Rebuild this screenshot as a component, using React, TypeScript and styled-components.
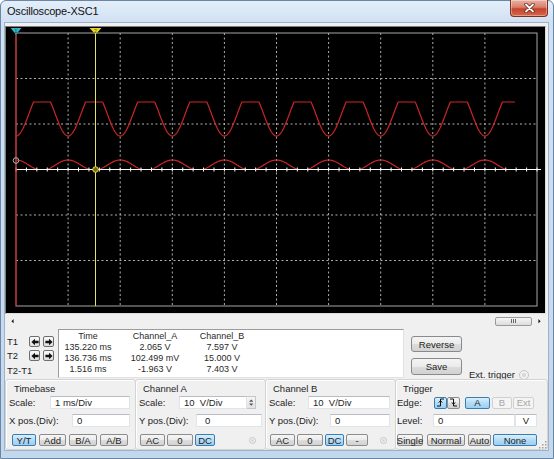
import styled, { createGlobalStyle } from 'styled-components';

const GlobalStyle = createGlobalStyle`
  html, body { margin: 0; padding: 0; }
  body {
    width: 554px;
    height: 459px;
    overflow: hidden;
    background: #fff;
    font-family: 'Liberation Sans', Arial, sans-serif;
    font-size: 9px;
    color: #1e1e1e;
  }
  * { box-sizing: border-box; }
`;

// scope geometry, in page pixels
const X0 = 16;
const X1 = 537;
const Y0 = 33;
const Y1 = 306;
const DX = 52.1;
const DY = 45.5;
const AXIS = Y0 + 3 * DY;
const TRACE_END = 515;

const traceA = () => {
  let d = '';
  for (let x = X0; x <= TRACE_END; x += 0.5) {
    const t = (2 * Math.PI * (x - X0)) / DX;
    const v = Math.min(1, (1 - Math.cos(t)) / 1.515);
    const y = 136 - 34 * v;
    d += `${d ? 'L' : 'M'}${x.toFixed(1)} ${y.toFixed(2)}`;
  }
  return d;
};

const traceB = () => {
  let d = '';
  for (let x = X0; x <= TRACE_END; x += 0.5) {
    const t = (2 * Math.PI * (x - X0)) / DX;
    const v = Math.max(0, (Math.cos(t) + 0.825) / 1.825);
    const y = AXIS - 9.5 * v;
    d += `${d ? 'L' : 'M'}${x.toFixed(1)} ${y.toFixed(2)}`;
  }
  return d;
};

const Scope = () => {
  const vx = Array.from({ length: 9 }, (_, i) => X0 + DX * (i + 1));
  const hy = [1, 2, 4, 5].map((k) => Y0 + DY * k);
  const ticks = Array.from({ length: 51 }, (_, i) => X0 + (DX / 5) * i);
  const t2 = 95.5;
  return (
    <svg width={539} height={286} viewBox="6 27 539 286" style={{ display: 'block' }}>
      <rect x={6} y={27} width={539} height={286} fill="#000" />
      {vx.map((x) => (
        <line key={x} x1={x} y1={Y0} x2={x} y2={Y1} stroke="#b0b0b0" strokeDasharray="2 2.5" />
      ))}
      {hy.map((y) => (
        <line key={y} x1={X0} y1={y} x2={X1} y2={y} stroke="#b0b0b0" strokeDasharray="2 2.5" />
      ))}
      <rect x={X0} y={Y0} width={X1 - X0} height={Y1 - Y0} fill="none" stroke="#a6a6a6" />
      <path d={traceA()} fill="none" stroke="#cc2626" strokeWidth={1.2} />
      <path d={traceB()} fill="none" stroke="#cc2626" strokeWidth={1.2} />
      <line x1={X0} y1={AXIS} x2={541} y2={AXIS} stroke="#fff" />
      {ticks.map((x) => (
        <line key={x} x1={x} y1={AXIS - 2} x2={x} y2={AXIS + 2} stroke="#fff" />
      ))}
      <line x1={X0} y1={30} x2={X0} y2={Y1} stroke="#c41a1a" strokeWidth={1.2} />
      <line x1={t2} y1={30} x2={t2} y2={Y1} stroke="#e2e26a" strokeWidth={1} />
      <polygon points="10.5,28 21.5,28 16,34.5" fill="#2fb6c6" />
      <text x={16} y={32.6} fontSize={5} textAnchor="middle" fill="#0a3a40" fontFamily="Liberation Sans, sans-serif">1</text>
      <polygon points="89.5,28 101.5,28 95.5,34.5" fill="#e6d62a" />
      <text x={t2} y={32.6} fontSize={5} textAnchor="middle" fill="#4a4000" fontFamily="Liberation Sans, sans-serif">2</text>
      <circle cx={X0} cy={160.5} r={2.8} fill="none" stroke="#9fb8c0" strokeWidth={1} />
      <circle cx={t2} cy={AXIS} r={2.8} fill="#7a6a10" stroke="#e6d84a" strokeWidth={1} />
    </svg>
  );
};

const Window = styled.div`
  width: 554px;
  height: 459px;
  display: flex;
  flex-direction: column;
  padding: 0 4px 7px 3px;
  border: 1px solid #6a86a6;
  border-radius: 6px 6px 0 0;
  background: linear-gradient(180deg, #e4eef9 0, #d0e1f3 21px, #c3d7ed 100%);
`;

const TitleBar = styled.div`
  height: 21px;
  flex: none;
  display: flex;
  justify-content: space-between;
  align-items: flex-start;
`;

const Title = styled.div`
  padding: 4px 0 0 3px;
  font-size: 11px;
  letter-spacing: -0.2px;
  color: #111;
`;

const CloseButton = styled.div`
  width: 38px;
  height: 17px;
  margin-top: -1px;
  margin-right: 1px;
  display: flex;
  align-items: center;
  justify-content: center;
  border: 1px solid #7e2e26;
  border-top: none;
  border-radius: 0 0 4px 4px;
  background: linear-gradient(180deg, #eab0a2 0%, #d8806c 45%, #c5432c 55%, #d8654a 100%);
  box-shadow: inset 0 0 0 1px rgba(255, 255, 255, 0.35);
`;

const Client = styled.div`
  flex: 1;
  position: relative;
  display: flex;
  flex-direction: column;
  padding-top: 3px;
  background: #f0f0f0;
  border: 1px solid #9cb2ca;
`;

const ScreenFrame = styled.div`
  width: 541px;
  height: 288px;
  border: 1px solid;
  border-color: #7c7c7c #dcdcdc #dcdcdc #7c7c7c;
  background: #000;
`;

const ScrollBar = styled.div`
  height: 12px;
  margin-top: 1px;
  display: flex;
  align-items: center;
`;

const ScrollArrow = styled.div<{ $w: number }>`
  width: ${(p) => p.$w}px;
  height: 12px;
  display: flex;
  align-items: center;
  justify-content: center;
`;

const ScrollTrack = styled.div`
  flex: 1;
  height: 12px;
  display: flex;
  align-items: center;
  justify-content: flex-end;
`;

const ScrollThumb = styled.div`
  width: 37px;
  height: 9px;
  margin-right: 1px;
  border: 1px solid #9a9a9a;
  border-radius: 2px;
  background: linear-gradient(180deg, #f6f6f6, #dcdcdc);
  display: flex;
  align-items: center;
  justify-content: center;
  gap: 1px;
`;

const Grip = styled.span`
  width: 1px;
  height: 4px;
  background: #6a6a6a;
`;

const ReadoutRow = styled.div`
  height: 49px;
  margin-top: 2px;
  display: flex;
`;

const CursorPanel = styled.div`
  width: 53px;
  padding: 7px 0 0 2px;
  display: flex;
  flex-direction: column;
`;

const CursorLine = styled.div<{ $gap: number }>`
  height: 11px;
  margin-top: ${(p) => p.$gap}px;
  display: flex;
  align-items: center;
  gap: 3px;
  font-size: 9.5px;
`;

const CursorName = styled.span<{ $w: number }>`
  width: ${(p) => p.$w}px;
`;

const StepButton = styled.div`
  width: 11px;
  height: 11px;
  border: 1px solid #6e6e6e;
  border-radius: 2px;
  background: linear-gradient(180deg, #fafafa, #dedede);
  display: flex;
  align-items: center;
  justify-content: center;
`;

const ReadoutBox = styled.div`
  width: 346px;
  height: 49px;
  padding-top: 1px;
  background: #fff;
  border: 1px solid;
  border-color: #9c9c9c #e2e2e2 #e2e2e2 #9c9c9c;
  display: grid;
  grid-template-columns: 58px 76px 58px;
  grid-auto-rows: 11px;
  align-content: start;
`;

const Cell = styled.div`
  text-align: center;
  line-height: 11px;
  white-space: nowrap;
  color: #2a2a2a;
`;

const SideButtons = styled.div`
  width: 51px;
  margin-left: 7px;
  display: flex;
  flex-direction: column;
`;

const BigButton = styled.div<{ $h: number; $top: number }>`
  height: ${(p) => p.$h}px;
  margin-top: ${(p) => p.$top}px;
  border: 1px solid #8a8a8a;
  border-radius: 3px;
  background: linear-gradient(180deg, #f4f4f4 0%, #ebebeb 50%, #dcdcdc 51%, #d2d2d2 100%);
  display: flex;
  align-items: center;
  justify-content: center;
  font-size: 9.5px;
  color: #1e1e1e;
`;

const ExtTrigger = styled.div`
  margin-left: 7px;
  margin-bottom: -2px;
  align-self: flex-end;
  height: 11px;
  display: flex;
  align-items: center;
  gap: 4px;
  font-size: 9.5px;
`;

const Radio = styled.span<{ $size: number }>`
  width: ${(p) => p.$size}px;
  height: ${(p) => p.$size}px;
  border-radius: 50%;
  border: 1px solid #c4c4c4;
  background: radial-gradient(circle at 50% 50%, #d8d8d8 0 30%, #f2f2f2 45%);
  flex: none;
`;

const GroupRow = styled.div`
  height: 71px;
  margin-top: 1px;
  display: flex;
`;

const Group = styled.div<{ $w: number; $pad?: number }>`
  width: ${(p) => p.$w}px;
  padding: 3px 0 0 ${(p) => p.$pad ?? 3}px;
  border: 1px solid #d3d3d3;
  border-radius: 3px;
  box-shadow: inset 1px 1px 0 #fff;
  display: flex;
  flex-direction: column;
  & + & {
    margin-left: -1px;
  }
`;

const GroupLabel = styled.div<{ $indent: number }>`
  height: 12px;
  line-height: 12px;
  margin-left: ${(p) => p.$indent}px;
  font-size: 9.5px;
`;

const FieldRow = styled.div<{ $top: number }>`
  height: 13px;
  margin-top: ${(p) => p.$top}px;
  display: flex;
  align-items: center;
`;

const FieldLabel = styled.span<{ $w: number }>`
  width: ${(p) => p.$w}px;
  flex: none;
  font-size: 9.5px;
  white-space: nowrap;
`;

const Field = styled.div<{ $w: number; $pad?: number; $center?: boolean }>`
  width: ${(p) => p.$w}px;
  height: 13px;
  padding-left: ${(p) => p.$pad ?? 4}px;
  background: #fff;
  border: 1px solid #e0e3e8;
  border-top-color: #b9bcc2;
  display: flex;
  align-items: center;
  justify-content: ${(p) => (p.$center ? 'center' : 'flex-start')};
  font-size: 9.5px;
  white-space: pre;
`;

const Spinner = styled.div`
  width: 9px;
  height: 13px;
  border: 1px solid #c6c6c6;
  border-left: none;
  background: linear-gradient(180deg, #f6f6f6, #e2e2e2);
  display: flex;
  flex-direction: column;
  align-items: center;
  justify-content: space-around;
  padding: 1px 0;
`;

const ButtonRow = styled.div<{ $indent: number }>`
  height: 12px;
  margin-top: 7px;
  margin-left: ${(p) => p.$indent}px;
  display: flex;
  align-items: center;
`;

const Btn = styled.div<{ $w: number; $gap?: number; $on?: boolean; $off?: boolean }>`
  width: ${(p) => p.$w}px;
  height: 12px;
  margin-left: ${(p) => p.$gap ?? 0}px;
  flex: none;
  display: flex;
  align-items: center;
  justify-content: center;
  font-size: 9.5px;
  color: ${(p) => (p.$off ? '#a6a6a6' : '#1e1e1e')};
  border: 1px solid ${(p) => (p.$on ? '#3a7db3' : p.$off ? '#d0d0d0' : '#8c8c8c')};
  border-radius: 2px;
  background: ${(p) =>
    p.$on
      ? 'linear-gradient(180deg, #d9effc 0%, #b3dcf6 50%, #9ccff2 100%)'
      : p.$off
        ? '#f4f4f4'
        : 'linear-gradient(180deg, #f6f6f6 0%, #ebebeb 50%, #dddddd 51%, #d3d3d3 100%)'};
`;

const ResizeGrip = styled.svg`
  position: absolute;
  right: 1px;
  bottom: 1px;
`;

const Arrow = ({ dir }: { dir: 'l' | 'r' }) => (
  <svg width={8} height={8} viewBox="0 0 10 10">
    <path
      d={dir === 'l' ? 'M0.5 5 L5 0.8 V3.3 H9.5 V6.7 H5 V9.2 Z' : 'M9.5 5 L5 0.8 V3.3 H0.5 V6.7 H5 V9.2 Z'}
      fill="#111"
    />
  </svg>
);

const Tri = ({ dir, size = 4, color = '#222' }: { dir: 'l' | 'r' | 'u' | 'd'; size?: number; color?: string }) => {
  const pts = {
    l: '4,0 4,8 0,4',
    r: '0,0 0,8 4,4',
    u: '0,4 8,4 4,0',
    d: '0,0 8,0 4,4',
  }[dir];
  const vertical = dir === 'u' || dir === 'd';
  return (
    <svg width={vertical ? size * 1.5 : size} height={vertical ? size : size * 1.5} viewBox={vertical ? '0 0 8 4' : '0 0 4 8'}>
      <polygon points={pts} fill={color} />
    </svg>
  );
};

const EdgeIcon = ({ rising }: { rising: boolean }) => (
  <svg width={9} height={9} viewBox="0 0 9 9">
    <path
      d={rising ? 'M1 8 H4.5 V1 H8' : 'M1 1 H4.5 V8 H8'}
      fill="none"
      stroke="#111"
      strokeWidth={1}
    />
    <path d={rising ? 'M2.8 4.6 L4.5 2.6 L6.2 4.6' : 'M2.8 4.4 L4.5 6.4 L6.2 4.4'} fill="none" stroke="#111" strokeWidth={1} />
  </svg>
);

const readout = [
  ['Time', 'Channel_A', 'Channel_B'],
  ['135.220 ms', '2.065 V', '7.597 V'],
  ['136.736 ms', '102.499 mV', '15.000 V'],
  ['1.516 ms', '-1.963 V', '7.403 V'],
];

export default function App() {
  return (
    <>
      <GlobalStyle />
      <Window>
        <TitleBar>
          <Title>Oscilloscope-XSC1</Title>
          <CloseButton>
            <svg width={11} height={10} viewBox="0 0 11 10">
              <path d="M2 1.5 L9 8.5 M9 1.5 L2 8.5" stroke="#5a1c14" strokeWidth={3.2} strokeLinecap="round" />
              <path d="M2 1.5 L9 8.5 M9 1.5 L2 8.5" stroke="#fff" strokeWidth={1.8} strokeLinecap="round" />
            </svg>
          </CloseButton>
        </TitleBar>
        <Client>
          <ScreenFrame>
            <Scope />
          </ScreenFrame>

          <ScrollBar>
            <ScrollArrow $w={14}>
              <Tri dir="l" size={3} />
            </ScrollArrow>
            <ScrollTrack>
              <ScrollThumb>
                <Grip />
                <Grip />
                <Grip />
              </ScrollThumb>
            </ScrollTrack>
            <ScrollArrow $w={12}>
              <Tri dir="r" size={3} />
            </ScrollArrow>
            <ScrollArrow $w={3} />
          </ScrollBar>

          <ReadoutRow>
            <CursorPanel>
              <CursorLine $gap={0}>
                <CursorName $w={19}>T1</CursorName>
                <StepButton><Arrow dir="l" /></StepButton>
                <StepButton><Arrow dir="r" /></StepButton>
              </CursorLine>
              <CursorLine $gap={3}>
                <CursorName $w={19}>T2</CursorName>
                <StepButton><Arrow dir="l" /></StepButton>
                <StepButton><Arrow dir="r" /></StepButton>
              </CursorLine>
              <CursorLine $gap={4}>
                <CursorName $w={40}>T2-T1</CursorName>
              </CursorLine>
            </CursorPanel>
            <ReadoutBox>
              {readout.flat().map((txt, i) => (
                <Cell key={i}>{txt}</Cell>
              ))}
            </ReadoutBox>
            <SideButtons>
              <BigButton $h={16} $top={7}>Reverse</BigButton>
              <BigButton $h={17} $top={6}>Save</BigButton>
            </SideButtons>
            <ExtTrigger>
              Ext. trigger
              <Radio $size={10} />
            </ExtTrigger>
          </ReadoutRow>

          <GroupRow>
            <Group $w={131}>
              <GroupLabel $indent={5}>Timebase</GroupLabel>
              <FieldRow $top={1}>
                <FieldLabel $w={41}>Scale:</FieldLabel>
                <Field $w={80}>1 ms/Div</Field>
              </FieldRow>
              <FieldRow $top={5}>
                <FieldLabel $w={63}>X pos.(Div):</FieldLabel>
                <Field $w={58}>0</Field>
              </FieldRow>
              <ButtonRow $indent={3}>
                <Btn $w={24} $on>Y/T</Btn>
                <Btn $w={27} $gap={3}>Add</Btn>
                <Btn $w={28} $gap={3}>B/A</Btn>
                <Btn $w={28} $gap={3}>A/B</Btn>
              </ButtonRow>
            </Group>

            <Group $w={131}>
              <GroupLabel $indent={4}>Channel A</GroupLabel>
              <FieldRow $top={1}>
                <FieldLabel $w={40}>Scale:</FieldLabel>
                <Field $w={68}>{'10  V/Div'}</Field>
                <Spinner>
                  <Tri dir="u" size={3} color="#555" />
                  <Tri dir="d" size={3} color="#555" />
                </Spinner>
              </FieldRow>
              <FieldRow $top={5}>
                <FieldLabel $w={57}>Y pos.(Div):</FieldLabel>
                <Field $w={66} $pad={8}>0</Field>
              </FieldRow>
              <ButtonRow $indent={1}>
                <Btn $w={25}>AC</Btn>
                <Btn $w={26} $gap={2}>0</Btn>
                <Btn $w={20} $gap={2} $on>DC</Btn>
                <Radio $size={7} style={{ marginLeft: 34 }} />
              </ButtonRow>
            </Group>

            <Group $w={131}>
              <GroupLabel $indent={4}>Channel B</GroupLabel>
              <FieldRow $top={1}>
                <FieldLabel $w={39}>Scale:</FieldLabel>
                <Field $w={82}>{'10  V/Div'}</Field>
              </FieldRow>
              <FieldRow $top={5}>
                <FieldLabel $w={61}>Y pos.(Div):</FieldLabel>
                <Field $w={60}>0</Field>
              </FieldRow>
              <ButtonRow $indent={1}>
                <Btn $w={25}>AC</Btn>
                <Btn $w={26} $gap={2}>0</Btn>
                <Btn $w={19} $gap={2} $on>DC</Btn>
                <Btn $w={22} $gap={2}>-</Btn>
                <Radio $size={7} style={{ marginLeft: 12 }} />
              </ButtonRow>
            </Group>

            <Group $w={153} $pad={1}>
              <GroupLabel $indent={6}>Trigger</GroupLabel>
              <FieldRow $top={1}>
                <FieldLabel $w={37}>Edge:</FieldLabel>
                <Btn $w={13} $on><EdgeIcon rising /></Btn>
                <Btn $w={13}><EdgeIcon rising={false} /></Btn>
                <Btn $w={25} $gap={5} $on>A</Btn>
                <Btn $w={20} $gap={2} $off>B</Btn>
                <Btn $w={21} $gap={1} $off>Ext</Btn>
              </FieldRow>
              <FieldRow $top={5}>
                <FieldLabel $w={36}>Level:</FieldLabel>
                <Field $w={82}>0</Field>
                <Field $w={22} $pad={0} $center>V</Field>
              </FieldRow>
              <ButtonRow $indent={0}>
                <Btn $w={26}>Single</Btn>
                <Btn $w={38} $gap={4}>Normal</Btn>
                <Btn $w={23} $gap={3}>Auto</Btn>
                <Btn $w={44} $gap={2} $on>None</Btn>
              </ButtonRow>
            </Group>
          </GroupRow>

          <ResizeGrip width={9} height={9} viewBox="0 0 9 9">
            {[
              [7, 1],
              [7, 4],
              [4, 4],
              [7, 7],
              [4, 7],
              [1, 7],
            ].map(([x, y]) => (
              <rect key={`${x}-${y}`} x={x} y={y} width={1.5} height={1.5} fill="#a0a0a0" />
            ))}
          </ResizeGrip>
        </Client>
      </Window>
    </>
  );
}
